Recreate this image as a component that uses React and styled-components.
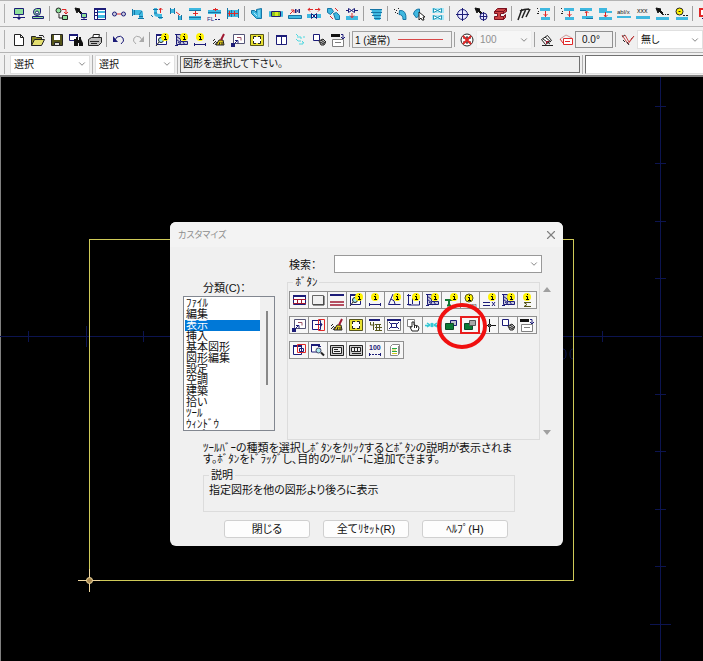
import React, { useState } from "react";
import styled, { createGlobalStyle } from "styled-components";
import { ChevronDown, X } from "lucide-react";

const NAVY = "#1c1c78";
const CYAN = "#3fb8e0";
const RED = "#e02828";
const GREEN = "#8fe09a";
const DARK = "#222222";
const MAROON = "#a01830";
const GRAY = "#808080";

// layer: [fill, stroke, path, strokeWidth]
const infoDot = (x, y) => [
    ["#fff200", "none", `M${x - 3} ${y}a3 3 0 1 0 6 0a3 3 0 1 0 -6 0`],
    ["none", "#fff200", `M${x - 3} ${y}a3 3 0 1 0 6 0a3 3 0 1 0 -6 0`, 2],
    ["none", "#000", `M${x + 0.5} ${y - 3}v1M${x - 1} ${y - 0.5}h1.500v3M${x - 1} ${y + 2.5}h3`],
];

const pointer = ["#111", "#111", "M1 1l5 1l-1 1l3 3l-1 1l-3 -3l-1 2z"];

const ICONS = {
    pump: [[GREEN, NAVY, "M2.5 1.5h9v6h-9z"], ["none", NAVY, "M7 8v3M1 10.5h12"], [NAVY, "none", "M4 10h6l-3 3z"]],
    fan: [[GREEN, NAVY, "M2.5 5a3.5 3.5 0 1 0 7 0V1.5h-4a3.5 3.5 0 0 0 -3 3.5z"], ["#fff", NAVY, "M4.5 5.5a1.5 1.5 0 1 0 3 0a1.5 1.5 0 1 0 -3 0"], [GREEN, NAVY, "M1.5 9.5h11v2h-11z"]],
    copyItem: [[GREEN, DARK, "M1 3.5a2.5 2.5 0 1 0 5 0a2.5 2.5 0 1 0 -5 0"], [GREEN, DARK, "M7.5 8.5h5v4h-5z"], ["none", RED, "M7 2.5h4v4M9 5l2 2l2 -2"], ["none", DARK, "M4 7v4h3"]],
    pickItem: [pointer, [GREEN, NAVY, "M7.5 6.5h5v4h-5zM10 11v2M7 12.5h6"]],
    table: [["#fff", NAVY, "M1.5 1.5h11v11h-11z"], ["none", NAVY, "M1 2h12", 2], [CYAN, "none", "M5 4h7v2h-7zM5 8h7v3h-7z"], ["none", NAVY, "M4.5 2v10M2 5.5h2M2 8.5h2"]],
    link: [["#ccd", NAVY, "M.5 7a2 2 0 1 0 4 0a2 2 0 1 0 -4 0M9.5 7a2 2 0 1 0 4 0a2 2 0 1 0 -4 0"], ["none", RED, "M5 7h4"]],
    elbow: [[CYAN, "none", "M1 3h8q3 0 3 4v5h-4v-4h-7z"], ["none", "#1675a5", "M1.5 2v7M3.5 3v5M7 11.5h6M8 9.5h4M8 8l3 -4"]],
    branch: [[CYAN, "none", "M4 1h3v5q0 1 3 1h2v5h-3v-2q-5 0 -5 -3z"], ["none", "#1675a5", "M3 2.5h5M8 10.5h5M1 8l2 2M4 6h3"], ["none", RED, "M10.5 1v5M9 3l1.5 -2l2 2"]],
    offset: [[CYAN, "none", "M1 2h5v4h-5zM9 9h4v4h-4z"], ["none", "#1675a5", "M1.5 1v6M5.5 1v6M9.5 8v5M12.5 8v5"], ["none", RED, "M7 5l4 3"]],
    raise: [[CYAN, "none", "M1 1h12v3h-12zM1 9h12v4h-12z"], ["none", "#1675a5", "M1 3.5h12M1 10.5h12"], ["none", RED, "M7.5 4v5M5 6.5h5"]],
    level: [[CYAN, "none", "M1 3h13v4h-13z"], ["none", "#1675a5", "M1 5.5h13"], ["none", RED, "M8.5 1v3M6 2.5h5M8.5 7v3"], { text: "FL", x: 0, y: 14, size: 6, fill: NAVY }, ["none", NAVY, "M8 12.5h2M11 12.5h2"]],
    flange: [[CYAN, "none", "M1 3h12v7h-12z"], ["none", "#1675a5", "M1.5 1v11M12.5 2v9M5.500 3v7"], ["none", RED, "M2 6.5h10M8.5 4v5M3.5 4v5"]],
    wye: [[CYAN, "#1675a5", "M1.5 3.5h3l2 2v-3l5 -1v10h-5l-5 -5z"], ["none", "#aee8ff", "M9 3v7M4 6l3 3"]],
    damper: [["#8ec520", NAVY, "M2.5 4.5h9v5h-9z"], [CYAN, CYAN, "M.5 4.5h1v5h-1zM12.5 4.5h1v5h-1z"], ["#d8e820", "none", "M6 5h3v4h-3z"]],
    valveUp: [[CYAN, "#1675a5", "M.5 8.5h13v3h-13z"], ["#fff", NAVY, "M7.5 2l4 4v-4l-4 4z"], ["none", RED, "M2 7l4 -4M3 3h3v3"]],
    valveMove: [["none", RED, "M1 2.5h5M8 2.5h5M3 1l-2 1.5l2 2M11 1l2 1.5l-2 2"], [CYAN, "none", "M0 7h14v4h-14z"], ["#fff", NAVY, "M4.5 6.5l5 5v-5l-5 5z"]],
    joints: [[CYAN, "#1675a5", "M1.5 1.5h4l2 3l-3 3l-3 -2zM7.5 6.5l3 -1l3 3v4h-4z"], ["none", RED, "M9 1l3 3M4 9l3 3"]],
    valveDown: [[CYAN, "none", "M1 9h12v4h-12z"], ["#fff", NAVY, "M3.5 1.5l6 4v-4l-6 4z"], ["none", NAVY, "M1 3.5h3M9 3.5h4"], ["none", RED, "M7 6v5M5 8.5l2 2l2 -2"]],
    stack: [[CYAN, "none", "M2 2h11l-2 11h-5z"], ["none", "#1675a5", "M1 2.5h12M2 5.5h11M3 8.5h9M5 11.5h7"]],
    pickElbow: [["none", DARK, "M1 2.5h1M3 3.5h1M5 1.5h1M2 5.5h1M4 6.5h1"], [CYAN, "#1675a5", "M6.5 3.5q7 -1 6.5 9h-3q0 -5 -4 -5z"]],
    pickFan: [[CYAN, "#1675a5", "M1.5 7q1 -5 6 -5v6l-3 3z"], ["#fff", DARK, "M7 5v8l2 -2l1 2h2l-1 -3h2z"]],
    valves: [["#a8e8f8", "none", "M1 1h12v5h-12zM1 8h12v5h-12z"], ["#fff", "#2298b8", "M2.5 1.5l8 4v-4l-8 4zM2.5 8.5l8 4v-4l-8 4z"]],
    target: [["#e8e8ff", NAVY, "M2.5 7.5a5 5 0 1 0 10 0a5 5 0 1 0 -10 0"], ["none", NAVY, "M7.5 1v13M1 7.5h13"]],
    pickTarget: [pointer, ["#e8e8ff", NAVY, "M6 9.5a3.5 3.5 0 1 0 7 0a3.5 3.5 0 1 0 -7 0M9.5 5v9M6 9.5h7"]],
    beam: [["#c44", "#7a1020", "M1.5 4.5l3 -3h9l-3 3zM1.5 4.5h9v2h-3v3h3v3h-9v-3h3v-3h-3zM10.5 4.5l3 -3v3l-3 2zM10.5 9.5l2 -2v3l-2 2z"]],
    hatchLine: [["none", DARK, "M1 13L5 2M5 11L9 2M9 10L13 2M3 4q4 -2 9 -2", 1.5]],
    routeA: [["none", DARK, "M1 1.5h1M2 4.5h1M4 2.5h1M1 6.5h2"], [CYAN, "none", "M4 1h10v3h-10zM5 10h9v3h-9z"], ["none", RED, "M9.5 4v6M7.5 7l2 2l2 -2"]],
    routeB: [[CYAN, "none", "M1 1h12v3h-12zM3 9h11v3h-11z"], ["none", "#1675a5", "M1 3.5h6M7 11.5h7"], ["none", RED, "M7.5 5v4M6 6l1.5 -2l2 2"]],
    routeC: [[CYAN, "none", "M1 1h8v3h5v2h-13zM1 10h13v3h-13z"], ["none", RED, "M7.5 5v5M6 8l1.5 2l2 -2"]],
    textLine: [{ text: "abl/x", x: 0, y: 7, size: 6, fill: DARK }, [CYAN, "none", "M0 9h14v2h-14z"]],
    crossLine: [{ text: "xxx", x: 1, y: 6, size: 7, fill: DARK }, [CYAN, "none", "M0 9h14v3h-14z"]],
    pickLine: [pointer, [CYAN, "none", "M1 10h13v3h-13z"], ["none", DARK, "M7 7.5h2M10 7.5h1M12 7.5h2"]],
    gearLine: [["#fff200", DARK, "M2 4.5a3.5 3.5 0 1 0 7 0a3.5 3.5 0 1 0 -7 0M4.5 4.5h2"], [CYAN, "none", "M2 10h12v3h-12z"], ["none", DARK, "M9 8.5h2M12 8.5h2"]],
    redBox: [["#fff", RED, "M2 2h11v7h-11z", 2], ["none", NAVY, "M4 11.5h6"]],
    blank: [["#fff", DARK, "M2.5 1.5h6l3 3v8h-9zM8.5 1.5v3h3"]],
    folder: [["#8c8c20", DARK, "M.5 12.5v-9h4l1 1h5v2"], ["#e4df70", DARK, "M.5 12.5l3 -6h10l-3 6z"], ["none", DARK, "M8 2.5h4l1 2"]],
    save: [["#55551a", DARK, "M1.5 1.5h11v11h-11z"], ["#fff", "none", "M4 2h6v5h-6z"], ["#ddd", DARK, "M4.5 9.5h5v3h-5z"]],
    find: [["#fff", NAVY, "M.5 1.5h8v6h-8z"], ["none", NAVY, "M0 2h9", 2], ["#111", "none", "M5 6h2v-2h2v3h1v-3h2v2l2 4v3h-4v-3h-1v3h-4v-3z"]],
    print: [["#fff", DARK, "M4.5 5.5l1 -4h6l-1 4"], ["#bbb", DARK, "M.5 6.5l3 -2h10v5l-3 3h-10z"], ["none", DARK, "M2 8.5h9M3 10.5h6"]],
    undo: [["none", NAVY, "M3 7l2 -3q4 -2 6 1t-2 6"], [NAVY, "none", "M1 3v6h5z"]],
    redo: [["none", "#aaaaaa", "M11 7l-2 -3q-4 -2 -6 1t2 6"], ["#aaaaaa", "none", "M13 3v6h-5z"]],
    zoomInfo: [["#fff", NAVY, "M1.5 2.5h10v9h-10z"], ["none", NAVY, "M1 2h10", 2], ["#9de8f0", DARK, "M3.5 7a2.5 2.5 0 1 0 5 0a2.5 2.5 0 1 0 -5 0M4 9l-3 4"], ...infoDot(10, 4)],
    hatchInfo: [["#c8c8dd", NAVY, "M2.5 1.5v10h11v-3h-7v-7z"], ["none", NAVY, "M2 3l4 3M2 6l5 4M4 9l4 3M9 9l2 3M1 1.5h3M1 12.5h3"], ...infoDot(10, 4)],
    distInfo: [...infoDot(7, 4), ["none", NAVY, "M1 11.5h12M1.5 10v3M12.5 10v3"]],
    broom: [["#e0c81a", DARK, "M7 7l4 0l1 5h-8z"], ["none", MAROON, "M9 7l3 -6", 2], ["none", DARK, "M1 8l2 -2M1 11l3 -3M3 12l2 -3M7 12l1 -3M10 12v-3"]],
    extents: [["#fff", "#557", "M2.5 1.5h11v9h-11z"], ["none", "#9a5064", "M6 4.5h4v3"], ["none", NAVY, "M3 11l4 -4M4 7.5h3v3"], [NAVY, "none", "M0 10h4v4h-4z"]],
    yellowFrame: [["#e8e030", "#55551a", "M.5 1.5h13v11h-13z"], ["#fff", "none", "M3 4h8v6h-8z"], ["none", DARK, "M3.5 6v-2.5h2.5M8 3.5h2.5v2.5M10.5 8v2.5h-2.5M6 10.5h-2.5v-2.5"]],
    columns: [["#fff", NAVY, "M2.5 2.5h10v9h-10z"], ["none", NAVY, "M2 3h11", 2], ["none", NAVY, "M7.5 3v8"]],
    reload: [["none", "#50d8e0", "M4 4h4v2M10 4h2M3 6l2 2h3M9 8l2 2M6 11h4v-2M3 1l2 2"]],
    boxClip: [["#fff", NAVY, "M1.5 1.5h6v6h-6z"], ["#bbb", DARK, "M7 8l4 -2l3 3l-2 3h-3z"], ["none", DARK, "M8 9l4 2M9 7l4 3"]],
    cards: [["#fff", GRAY, "M1.5 6.5h11v7h-11z"], ["none", "#111", "M0 2.5h9", 3], ["none", GRAY, "M4 9.5h6"], ["none", NAVY, "M10 1.5h2v4M10 4l2 2l2 -2"]],
    noBug: [["#fff", DARK, "M1 7a6 6 0 1 0 12 0a6 6 0 1 0 -12 0"], ["none", DARK, "M3 5h8M3 9h8M7 3v8"], ["none", RED, "M3 3l8 8M11 3l-8 8", 2]],
    slope: [["#fff", DARK, "M1.5 6.5l6 -4l4 5l-6 4z"], ["none", DARK, "M2 12.5h11M3 6l7 5M5 4l6 5"], ["none", MAROON, "M6.5 8v3M6 8.5h3"]],
    redRect: [["none", "#cc9999", "M1 6l6 -4l6 3"], ["#fff", RED, "M4.5 5.5h9v6h-9z"], ["none", RED, "M6 8.5h5M1 6l3 4"]],
    redSlash: [["none", DARK, "M1 4l3 -2M2 7l2 2M10 6l3 -3"], ["none", "#c84444", "M1 2l6 9l6 -8M4 2l4 7l4 -5"], ["none", DARK, "M6 9l2 3"]],
    windowBars: [["#fff", NAVY, "M1.5 2.5h12v9h-12z"], ["none", NAVY, "M1 3h13", 2], ["none", MAROON, "M1 6.5h13M1 10.5h13"], ["none", MAROON, "M5.5 6v4M9.5 6v4"]],
    panel: [["#f0f0f0", "#666", "M1.5 2.5h11v9h-11z"], ["none", "#333", "M13 3v9M2 12h11"]],
    lineBars: [["none", NAVY, "M0 2h14", 2], ["none", MAROON, "M0 9h14M0 12h14", 1.5]],
    angleInfo: [["none", NAVY, "M6 1L1.5 11.5h12M4 6q4 1 4 5"], ...infoDot(10, 4)],
    areaInfo: [["none", NAVY, "M2.5 1v11h11v-4M1 2.5h4M1 11.5h4M6.5 5v6"], ...infoDot(10, 4)],
    pipeInfo: [["none", "#117733", "M1 7h8M5 7v6M3 12.5h4", 2], ...infoDot(10, 4)],
    gearInfo: [...infoDot(6, 5), ["none", "#55551a", "M2 5a4 4 0 1 0 8 0a4 4 0 1 0 -8 0"], { text: "nn", x: 7, y: 14, size: 6, fill: DARK }],
    equalInfo: [...infoDot(10, 4), ["none", NAVY, "M1 9.5h7M1 12.5h7M10 9l3 4M13 9l-3 4"]],
    sumInfo: [...infoDot(7, 4), ["none", "#55551a", "M11 9.5h-7l3 2l-3 2h7"]],
    frameRed: [["#fff", NAVY, "M1.5 2.5h8v9h-8z"], ["none", RED, "M7.5 1.5h6v11h-6z"], ["none", NAVY, "M4 6.5h7M9 4l2 2.5l-2 3M1 2.5h6"]],
    dimGrid: [["none", NAVY, "M1 2h11", 2], ["none", "#55551a", "M2.5 4v3h4M5.5 4v8M7 6.5h6M8.5 7v6M11.5 7v6M7 9.5h7M7 12.5h7"]],
    fit: [["#fff", GRAY, "M.5 1.5h13v11h-13z"], ["none", NAVY, "M0 2h14", 2], ["none", NAVY, "M4.5 5.5h5v4h-5zM2 4l2 2M12 4l-2 2M2 11l2 -2M12 11l-2 -2"]],
    hand: [["#fff", GRAY, "M1.5 1.5h7v7h-7z"], ["#fff", DARK, "M6 13l-2 -4l2 0v-5h2v3l4 1l1 2l-1 3z"], ["none", DARK, "M8.5 7v3M10.5 8v2"]],
    spread: [["none", "#35c8d4", "M0 7.5h5M9 7.5h5M2 5l3 2l-3 2M12 5l-3 2l3 2M6 5l2 4M8 5l-2 4", 1.5]],
    front: [["#c0c0d0", NAVY, "M6.5 2.5h6v5h-6z"], ["#0b7a35", "#0c4725", "M1.5 5.5h8v6h-8z"]],
    back: [["#0b7a35", "#0c4725", "M1.5 5.5h8v6h-8z"], ["#a8a8a8", "#555", "M6.5 2.5h6v5h-6z"]],
    cross: [["none", "#111", "M7.5 1v13M1 7.5h13"], ["#555", "#111", "M5.5 7.5L7.5 5.5L9.5 7.5L7.5 9.5z"]],
    dupRed: [["#fff", NAVY, "M1.5 3.5h8v8h-8z"], ["none", NAVY, "M1 3h9", 2], ["none", RED, "M5.5 1.5h8v8h-8z"], ["none", NAVY, "M7.5 5.5h4v3h-4z"]],
    search: [["#fff", NAVY, "M.5 2v7h6M7 3.5h3"], ["none", NAVY, "M0 2h9", 2], ["#a8e8ee", "#446", "M5 7.5a2.5 2.5 0 1 0 5 0a2.5 2.5 0 1 0 -5 0"], ["none", DARK, "M10 9.5l3 3", 2]],
    screenText: [["#ccc", DARK, "M.5 2.5h13v10h-13z"], ["#eee", DARK, "M2.5 4.5h9v6h-9z"], ["none", DARK, "M4 6.5h4M4 8.5h6"]],
    screenKeys: [["#ccc", DARK, "M.5 2.5h13v10h-13z"], ["#eee", DARK, "M2.5 4.5h9v4h-9z"], ["none", DARK, "M5.5 5v3M8.5 5v3M3 10.5h9"]],
    hundred: [{ text: "100", x: 1, y: 7, size: 7, fill: NAVY, bold: true }, ["none", NAVY, "M1 11.5h2M4 11.5h2M7 11.5h2M10 11.5h3M1.5 10v3M12.5 10v3"]],
    note: [["#fff", "#888", "M3.5 3.5l2 -2h7v9l-2 2h-7z"], ["none", "#26a84a", "M5 5.5h5M5 8.5h5"], ["none", "#d8c820", "M5 7h4M5 10.5h5"], ["none", "#888", "M11.5 3v8"]],
};

const Icon = ({ name }) => (
    <Glyph viewBox="0 0 14 14" aria-hidden="true">
        {ICONS[name].map((layer, i) =>
            layer.text ? (
                <text
                    key={i}
                    x={layer.x}
                    y={layer.y}
                    fontSize={layer.size}
                    fill={layer.fill}
                    fontWeight={layer.bold ? 700 : 400}
                >
                    {layer.text}
                </text>
            ) : (
                <path key={i} fill={layer[0]} stroke={layer[1]} d={layer[2]} strokeWidth={layer[3] || 1} />
            )
        )}
    </Glyph>
);

// "|" is a separator
const DUCT_TOOLS = [
    "pump", "fan", "|",
    "copyItem", "pickItem", "table", "link", "elbow", "branch", "offset", "raise", "level", "flange", "|",
    "wye", "damper", "valveUp", "valveMove", "joints", "valveDown", "|",
    "stack", "|",
    "pickElbow", "pickFan", "valves", "|",
    "target", "pickTarget", "beam", "|",
    "hatchLine", "routeA", "|",
    "routeA", "routeB", "routeC", "textLine", "crossLine", "pickLine", "gearLine", "|",
    "redBox",
];

const FILE_TOOLS = [
    "blank", "folder", "save", "find", "print", "|",
    "undo", "redo", "|",
    "zoomInfo", "hatchInfo", "distInfo", "broom", "extents", "yellowFrame", "|",
    "columns", "reload", "boxClip", "cards", "|",
];

const PALETTE = [
    ["windowBars", "panel", "lineBars", "zoomInfo", "distInfo", "angleInfo", "areaInfo", "hatchInfo", "pipeInfo", "gearInfo", "equalInfo", "hatchInfo", "sumInfo"],
    ["extents", "frameRed", "broom", "yellowFrame", "dimGrid", "fit", "hand", "spread", "front", "back", "cross", "boxClip", "cards"],
    ["dupRed", "search", "screenText", "screenKeys", "hundred", "note"],
];

const CATEGORIES = [
    "ﾌｧｲﾙ", "編集", "表示", "挿入", "基本図形", "図形編集", "設定",
    "空調", "建築", "拾い", "ﾂｰﾙ", "ｳｨﾝﾄﾞｳ", "ﾍﾙﾌﾟ",
];

const ToolButtons = ({ tools }) =>
    tools.map((tool, i) =>
        tool === "|" ? (
            <Separator key={i} />
        ) : (
            <ToolButton key={i} type="button" aria-label={tool}>
                <Icon name={tool} />
            </ToolButton>
        )
    );

const Combo = ({ label, value, width, grow, disabled }) => (
    <ComboBox $width={width} $grow={grow} $disabled={disabled}>
        <select aria-label={label} disabled={disabled} defaultValue={value}>
            <option>{value}</option>
        </select>
        <ChevronDown size={10} strokeWidth={2} />
    </ComboBox>
);

const Drawing = () => (
    <Sheet aria-hidden="true">
        <g stroke="#0c1450">
            <path d="M0 259.5H3000M660.5 0V3000" />
            <path d="M28.5 254v11M86.5 249v21M143.5 254v11M602.5 254v11" />
            <path d="M655 29.5h11M655 86.5h11M655 144.5h11M655 201.5h11M655 317.5h11M655 374.5h11M655 432.5h11M655 489.5h11M650 547.5h21" />
            <path fill="none" d="M563 272q3 0 3 5t-3 5M573 272q-3 0 -3 5t3 5" />
        </g>
        <rect x="89.5" y="162.5" width="484" height="341" fill="none" stroke="#cfca58" />
        <path d="M78 503.5h22M89.5 492v23" stroke="#f0d8a0" />
        <circle cx="89.5" cy="503.5" r="3" fill="#a88850" stroke="#f0d8a0" />
    </Sheet>
);

const CustomizeDialog = () => {
    const [category, setCategory] = useState("表示");

    return (
        <Dialog role="dialog" aria-label="カスタマイズ">
            <TitleBar>
                <Title>カスタマイズ</Title>
                <CloseButton type="button" aria-label="閉じる">
                    <X size={14} strokeWidth={2} />
                </CloseButton>
            </TitleBar>
            <SearchRow>
                <label htmlFor="search">検索：</label>
                <SearchBox>
                    <select id="search" defaultValue="">
                        <option value=""></option>
                    </select>
                    <ChevronDown size={10} strokeWidth={2} />
                </SearchBox>
            </SearchRow>
            <Columns>
                <CategoryPane>
                    <CategoryLabel id="category-label">分類(C)：</CategoryLabel>
                    <ListBox>
                        <List role="listbox" aria-labelledby="category-label">
                            {CATEGORIES.map((item) => (
                                <ListItem
                                    key={item}
                                    role="option"
                                    aria-selected={item === category}
                                    $selected={item === category}
                                    onClick={() => setCategory(item)}
                                >
                                    {item}
                                </ListItem>
                            ))}
                        </List>
                        <ScrollTrack>
                            <ScrollThumb />
                        </ScrollTrack>
                    </ListBox>
                </CategoryPane>
                <ButtonGroup>
                    <legend>ﾎﾞﾀﾝ</legend>
                    {PALETTE.map((row, i) => (
                        <PaletteRow key={i}>
                            {row.map((tool, j) => (
                                <PaletteButton key={j} type="button" aria-label={tool} $marked={tool === "back"}>
                                    <Icon name={tool} />
                                    {tool === "back" && (
                                        <Marker viewBox="0 0 52 48" aria-hidden="true">
                                            <ellipse cx="26" cy="24" rx="23" ry="21" />
                                        </Marker>
                                    )}
                                </PaletteButton>
                            ))}
                        </PaletteRow>
                    ))}
                </ButtonGroup>
                <Arrows viewBox="0 0 8 150" aria-hidden="true">
                    <path d="M0 6l4 -5l4 5zM0 144l4 5l4 -5z" />
                </Arrows>
            </Columns>
            <Hint>
                ﾂｰﾙﾊﾞｰの種類を選択しﾎﾞﾀﾝをｸﾘｯｸするとﾎﾞﾀﾝの説明が表示されま
                <br />
                す。ﾎﾞﾀﾝをﾄﾞﾗｯｸﾞし、目的のﾂｰﾙﾊﾞｰに追加できます。
            </Hint>
            <Description>
                <legend>説明</legend>
                指定図形を他の図形より後ろに表示
            </Description>
            <Actions>
                <ActionButton type="button">閉じる</ActionButton>
                <ActionButton type="button">全てﾘｾｯﾄ(R)</ActionButton>
                <ActionButton type="button">ﾍﾙﾌﾟ(H)</ActionButton>
            </Actions>
        </Dialog>
    );
};

const App = () => {
    return (
        <>
            <GlobalStyle />
            <Window>
                <Toolbar>
                    <Gripper />
                    <ToolButtons tools={DUCT_TOOLS} />
                </Toolbar>
                <Toolbar>
                    <Gripper />
                    <ToolButtons tools={FILE_TOOLS} />
                    <LineStyle type="button">
                        1 (通常)
                        <LineSample />
                    </LineStyle>
                    <Separator />
                    <ToolButtons tools={["noBug"]} />
                    <Combo label="縮尺" value="100" width={56} disabled />
                    <Separator />
                    <ToolButtons tools={["slope", "redRect"]} />
                    <AngleInput aria-label="角度" defaultValue="0.0°" />
                    <Separator />
                    <ToolButtons tools={["redSlash"]} />
                    <Combo label="種別" value="無し" width={64} grow />
                </Toolbar>
                <StatusBar>
                    <Gripper />
                    <Combo label="レイヤ" value="選択" width={80} />
                    <Gripper />
                    <Combo label="グループ" value="選択" width={80} />
                    <Gripper />
                    <Message>図形を選択して下さい。</Message>
                    <Gripper />
                    <CommandInput aria-label="入力" />
                </StatusBar>
                <Workspace>
                    <Drawing />
                    <CustomizeDialog />
                </Workspace>
            </Window>
        </>
    );
};

export default App;

// Styled Components
const GlobalStyle = createGlobalStyle`
    * {
        box-sizing: border-box;
    }
    body {
        margin: 0;
        background: #000;
        font-family: "Liberation Sans", "Noto Sans CJK JP", sans-serif;
        font-size: 11px;
        font-feature-settings: "palt";
        color: #111;
    }
    button, select, input {
        font: inherit;
        font-feature-settings: inherit;
        color: inherit;
    }
`;

const Window = styled.div`
    display: flex;
    flex-direction: column;
    min-height: 100vh;
    overflow: hidden;
`;

const Toolbar = styled.div`
    display: flex;
    align-items: center;
    height: 26px;
    padding-left: 3px;
    overflow: hidden;
    background: #f0f0f0;
    border-top: 1px solid #b4b4b4;
    font-size: 10px;
`;

const StatusBar = styled(Toolbar)`
    height: 25px;
    border-bottom: 2px solid #808080;
`;

const Gripper = styled.div`
    flex: none;
    width: 2px;
    height: 19px;
    margin-right: 4px;
    border-right: 1px solid #b0b0b0;

    ${StatusBar} & {
        margin: 0 2px 0 1px;
    }

    ${StatusBar} &:first-child {
        margin: 0 5px 0 0;
    }
`;

const Separator = styled.div`
    flex: none;
    width: 1px;
    height: 15px;
    margin: 0 2px;
    background: #a0a0a0;
`;

const ToolButton = styled.button`
    flex: none;
    display: flex;
    align-items: flex-start;
    width: 19px;
    height: 19px;
    padding: 3px 0 0 3px;
    border: 0;
    background: none;
`;

const Glyph = styled.svg`
    flex: none;
    width: 14px;
    height: 14px;
    font-family: "Liberation Sans", sans-serif;
`;

const LineStyle = styled.button`
    flex: none;
    display: flex;
    align-items: center;
    gap: 8px;
    width: 100px;
    height: 17px;
    padding: 0 8px 0 2px;
    border: 1px solid #a0a0a0;
    background: #f0f0f0;
    white-space: nowrap;
`;

const LineSample = styled.span`
    flex: 1;
    height: 1px;
    background: #d84848;
`;

const ComboBox = styled.div`
    flex: ${({ $grow }) => ($grow ? "1 0" : "0 0")} ${({ $width }) => $width}px;
    display: flex;
    align-items: center;
    height: 19px;
    background: ${({ $disabled }) => ($disabled ? "#f6f6f6" : "#fff")};
    border: 1px solid ${({ $disabled }) => ($disabled ? "#ececec" : "#e0e0e0")};
    color: ${({ $disabled }) => ($disabled ? "#909090" : "#111")};

    select {
        appearance: none;
        flex: 1;
        width: 100%;
        min-width: 0;
        height: 100%;
        padding: 0 14px 0 3px;
        border: 0;
        background: none;
        outline: none;
        opacity: 1;
    }

    svg {
        flex: none;
        margin: 0 2px 0 -12px;
        color: #707070;
        pointer-events: none;
    }
`;

const AngleInput = styled.input`
    flex: none;
    width: 38px;
    height: 17px;
    padding: 0 6px;
    border: 1px solid #909090;
    background: #f0f0f0;
`;

const Message = styled.output`
    flex: 7;
    height: 17px;
    padding: 0 2px;
    border: 1px solid #707070;
    line-height: 14px;
    white-space: nowrap;
`;

const CommandInput = styled.input`
    flex: 2;
    min-width: 0;
    height: 19px;
    border: 1px solid #707070;
    border-right: 0;
    border-bottom-color: #e0e0e0;
    background: #fff;
`;

const Workspace = styled.main`
    position: relative;
    flex: 1;
    min-height: 480px;
    border-left: 1px solid #808080;
    background: #000;
`;

const Sheet = styled.svg`
    position: absolute;
    top: 0;
    left: -1px;
    width: 100%;
    height: 100%;
`;

const Dialog = styled.section`
    position: absolute;
    top: 145px;
    left: 169px;
    display: flex;
    flex-direction: column;
    width: 393px;
    border-radius: 6px;
    background: #f0f0f0;
`;

const TitleBar = styled.header`
    display: flex;
    align-items: center;
    justify-content: space-between;
    height: 25px;
    padding: 0 5px 0 8px;
    border-radius: 6px 6px 0 0;
    background: #f3f3f3;
`;

const Title = styled.h1`
    margin: 0;
    font-size: 9px;
    font-weight: 400;
    color: #8c8c8c;
`;

const CloseButton = styled.button`
    display: flex;
    padding: 0;
    border: 0;
    background: none;
    color: #808080;
`;

const SearchRow = styled.div`
    display: flex;
    align-items: center;
    gap: 12px;
    padding: 8px 21px 0 119px;

    label {
        width: 33px;
        white-space: nowrap;
    }
`;

const SearchBox = styled(ComboBox).attrs({ $grow: true, $width: 100 })`
    height: 18px;
    border: 1px solid #999;
`;

const Columns = styled.div`
    display: flex;
    align-items: flex-start;
    padding: 3px 12px 0 13px;
`;

const CategoryPane = styled.div`
    width: 93px;
    padding-top: 4px;
`;

const CategoryLabel = styled.div`
    padding-left: 20px;
    line-height: 16px;
`;

const ListBox = styled.div`
    display: flex;
    height: 135px;
    border: 1px solid #828790;
    background: #fff;
`;

const List = styled.ul`
    flex: 1;
    margin: 0;
    padding: 1px 0 0 1px;
    overflow-y: auto;
    scrollbar-width: none;
    list-style: none;
`;

const ListItem = styled.li`
    height: 11px;
    padding-left: 1px;
    line-height: 11px;
    white-space: nowrap;
    background: ${({ $selected }) => ($selected ? "#0078d7" : "transparent")};
    color: ${({ $selected }) => ($selected ? "#fff" : "#111")};
`;

const ScrollTrack = styled.div`
    width: 14px;
    padding: 14px 6px 0;
    background: #f0f0f0;
`;

const ScrollThumb = styled.div`
    width: 2px;
    height: 74px;
    background: #888;
`;

const ButtonGroup = styled.fieldset`
    min-width: 0;
    height: 164px;
    margin: 0 3px 0 12px;
    padding: 0 4px 0 1px;
    border: 1px solid #dcdcdc;

    legend {
        margin-left: 4px;
        padding: 0 2px;
        line-height: 13px;
    }
`;

const PaletteRow = styled.div`
    display: flex;
    margin: 2px 0 7px;
`;

const PaletteButton = styled.button`
    position: relative;
    flex: none;
    display: flex;
    align-items: center;
    justify-content: center;
    width: 20px;
    height: 18px;
    margin-right: -1px;
    padding: 0;
    border: ${({ $marked }) => ($marked ? "2px solid #e81c1c" : "1px solid #909090")};
    background: #f6f6f6;
    z-index: ${({ $marked }) => ($marked ? 1 : 0)};
`;

const Marker = styled.svg`
    position: absolute;
    top: -16px;
    left: -26px;
    width: 52px;
    height: 48px;
    fill: none;
    stroke: #f01010;
    stroke-width: 4;
    pointer-events: none;
`;

const Arrows = styled.svg`
    flex: none;
    width: 8px;
    height: 150px;
    margin-top: 10px;
    fill: #a0a0a0;
`;

const Hint = styled.p`
    margin: 0;
    padding: 3px 0 0 33px;
    line-height: 11px;
    white-space: nowrap;
`;

const Description = styled.fieldset`
    height: 44px;
    margin: 3px 48px 0 33px;
    padding: 1px 5px;
    border: 1px solid #dcdcdc;
    line-height: 14px;

    legend {
        padding: 0 2px;
        line-height: 14px;
    }
`;

const Actions = styled.div`
    display: flex;
    gap: 13px;
    padding: 8px 0 8px 54px;
`;

const ActionButton = styled.button`
    width: 86px;
    height: 18px;
    padding: 0;
    border: 1px solid #d0d0d0;
    border-radius: 3px;
    background: #fdfdfd;
    line-height: 14px;
`;
